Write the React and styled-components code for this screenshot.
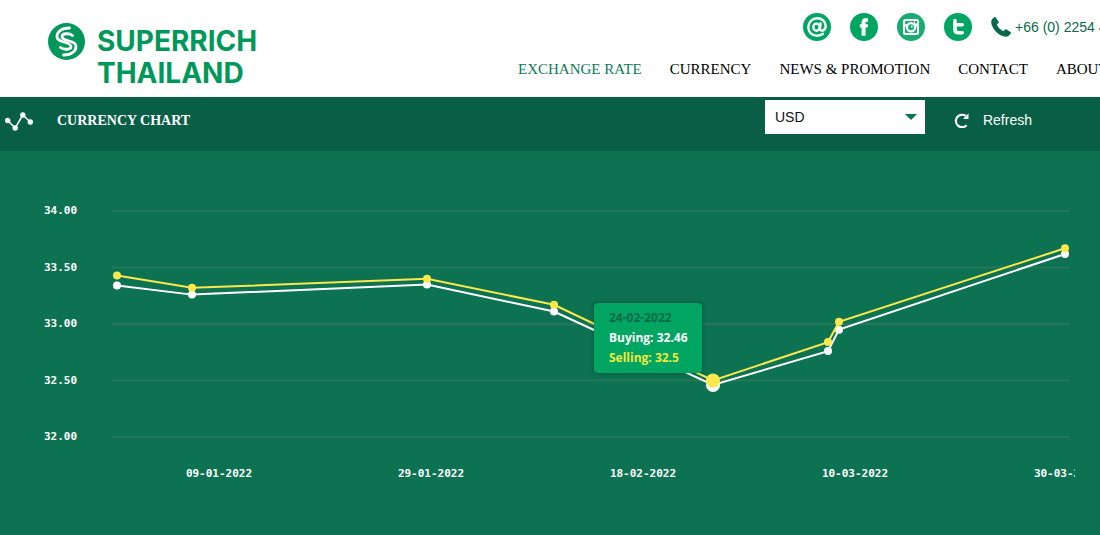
import React, { useState } from "react";
import styled, { createGlobalStyle } from "styled-components";

const CHART_W = 1075;
const CHART_H = 384;

const rateToY = (rate) => 60 + (34 - rate) * 113;

const rates = [
  { x: 117, buying: 33.34, selling: 33.43 },
  { x: 192, buying: 33.26, selling: 33.32 },
  { x: 427, buying: 33.35, selling: 33.4 },
  { x: 554, buying: 33.11, selling: 33.17 },
  { x: 713, buying: 32.46, selling: 32.5, date: "24-02-2022" },
  { x: 828, buying: 32.76, selling: 32.84 },
  { x: 839, buying: 32.95, selling: 33.02 },
  { x: 1065, buying: 33.62, selling: 33.67 },
];

const yTicks = [34, 33.5, 33, 32.5, 32];

const xTicks = [
  { x: 219, label: "09-01-2022" },
  { x: 431, label: "29-01-2022" },
  { x: 643, label: "18-02-2022" },
  { x: 855, label: "10-03-2022" },
  { x: 1067, label: "30-03-2022" },
];

const links = ["EXCHANGE RATE", "CURRENCY", "NEWS & PROMOTION", "CONTACT", "ABOUT US"];

const LogoMark = () => (
  <svg width="37" height="37" viewBox="0 0 37 37" aria-hidden="true">
    <circle cx="18.5" cy="18.5" r="18.5" fill="#00985a" />
    <g fill="none" stroke="#fff" strokeWidth="2.8" strokeLinecap="round">
      <path d="M21.5 5C13 5 9 9 9 13.5C9 20.5 23 18 23 23.5C23 27 15.500 27 12.500 24.500" />
      <path d="M15.500 32C24 32 28 28 28 23.500C28 16.500 14 19 14 13.500C14 10 21.500 10 24.500 12.500" />
    </g>
  </svg>
);

const MailIcon = () => (
  <svg width="28" height="28" viewBox="0 0 28 28" aria-hidden="true">
    <circle cx="14" cy="14" r="14" fill="#00a562" />
    <g fill="none" stroke="#fff" strokeWidth="2.4" strokeLinecap="round">
      <ellipse cx="13.5" cy="14.2" rx="3.2" ry="3.600" />
      <path d="M17.600 10.500L16.900 15.800C16.900 18.800 22.700 18.300 22.700 13C22.700 8.300 18.700 5.300 14.300 5.300C9.300 5.300 5.300 9.300 5.300 14.200C5.300 19.200 9.100 22.700 14 22.700C16.500 22.700 18.500 22 20 20.800" />
    </g>
  </svg>
);

const FacebookIcon = () => (
  <svg width="28" height="28" viewBox="0 0 28 28" aria-hidden="true">
    <circle cx="14" cy="14" r="14" fill="#00a562" />
    <path
      d="M11.600 22.800V14.500H9.800V11.200H11.600V9.500C11.600 6.300 13.200 5.300 15.900 5.300H18V8.800H16.700C15.800 8.800 15.600 9.200 15.600 9.900V11.200H18L17.700 14.500H15.600V22.800Z"
      fill="#fff"
    />
  </svg>
);

const InstagramIcon = () => (
  <svg width="28" height="28" viewBox="0 0 28 28" aria-hidden="true">
    <circle cx="14" cy="14" r="14" fill="#1aab70" />
    <path
      d="M8.500 6H19.500A2.500 2.500 0 0 1 22 8.500V19.500A2.500 2.500 0 0 1 19.500 22H8.500A2.500 2.500 0 0 1 6 19.500V8.500A2.500 2.500 0 0 1 8.500 6Z"
      fill="#fff"
    />
    <path d="M8 13.500H20V19.200A0.800 0.800 0 0 1 19.200 20H8.800A0.800 0.800 0 0 1 8 19.200Z" fill="#1aab70" />
    <path d="M8 8.800A0.800 0.800 0 0 1 8.800 8H17V11.200H8Z" fill="#1aab70" />
    <rect x="18" y="8" width="2.200" height="2.400" fill="#1aab70" />
    <circle cx="14" cy="14.200" r="5.200" fill="#fff" />
    <circle cx="14" cy="14.200" r="3" fill="#1aab70" />
    <circle cx="14.800" cy="13.500" r="1" fill="#fff" />
  </svg>
);

const TwitterIcon = () => (
  <svg width="28" height="28" viewBox="0 0 28 28" aria-hidden="true">
    <circle cx="14" cy="14" r="14" fill="#00a562" />
    <path
      d="M11 7.500V16.500C11 18.700 12 19.700 14.200 19.700H18.300M11 11.700H18.300"
      fill="none"
      stroke="#fff"
      strokeWidth="3.600"
      strokeLinecap="round"
      strokeLinejoin="round"
    />
  </svg>
);

const PhoneIcon = () => (
  <svg width="20" height="20" viewBox="0 0 20 20" aria-hidden="true">
    <path
      d="M4.500 0.300L7.500 4.500C8 5.300 7.800 5.800 7.200 6.300L5.800 7.500C7 10.500 9.500 13 12.500 14.300L13.800 12.800C14.300 12.200 14.900 12.100 15.600 12.500L19.500 15C20.100 15.400 20.100 16 19.700 16.600C18.500 18.500 17 19.800 14.800 19.700C8 19.300 0.500 11.500 0.200 5.200C0.100 3 1.300 1.500 3.200 0.200C3.700 -0.100 4.200 -0.100 4.500 0.300Z"
      fill="#08694a"
    />
  </svg>
);

const TrendIcon = () => (
  <svg width="28" height="20" viewBox="0 0 28 20" aria-hidden="true">
    <path d="M2.700 8.500L10.200 16L17.800 3L25.300 10" fill="none" stroke="#fff" strokeWidth="1.500" />
    <g fill="#fff">
      <circle cx="2.700" cy="8.500" r="2.700" />
      <circle cx="10.200" cy="16" r="2.700" />
      <circle cx="17.800" cy="3" r="2.700" />
      <circle cx="25.300" cy="10" r="2.700" />
    </g>
  </svg>
);

const RefreshIcon = () => (
  <svg width="16" height="16" viewBox="0 0 16 16" aria-hidden="true">
    <path d="M12.600 13.200A6.200 6.200 0 1 1 11.800 4" fill="none" stroke="#fff" strokeWidth="2.200" />
    <path d="M14.500 1.200V7H9Z" fill="#fff" />
  </svg>
);

const socials = [
  { name: "Email", Icon: MailIcon },
  { name: "Facebook", Icon: FacebookIcon },
  { name: "Instagram", Icon: InstagramIcon },
  { name: "Twitter", Icon: TwitterIcon },
];

const Series = ({ field, color, active }) => (
  <g fill={color}>
    <polyline
      points={rates.map((r) => `${r.x},${rateToY(r[field])}`).join(" ")}
      fill="none"
      stroke={color}
      strokeWidth="2"
    />
    {rates.map((r) => (
      <circle key={r.x} cx={r.x} cy={rateToY(r[field])} r={r === active ? 7 : 4} />
    ))}
  </g>
);

const CurrencyChart = () => {
  const active = rates.find((r) => r.date);
  const place = {
    right: `calc(${100 - (active.x / CHART_W) * 100}% + 11px)`,
    bottom: `calc(${100 - (rateToY(active.selling) / CHART_H) * 100}% + 8px)`,
  };

  return (
    <ChartPanel>
      <ChartArea>
        <Plot viewBox={`0 0 ${CHART_W} ${CHART_H}`} role="img" aria-label="Currency chart">
          {yTicks.map((tick) => (
            <g key={tick}>
              <line x1="112" x2="1070" y1={rateToY(tick)} y2={rateToY(tick)} stroke="#267659" strokeWidth="2" />
              <AxisText x="44" y={rateToY(tick) + 3}>
                {tick.toFixed(2)}
              </AxisText>
            </g>
          ))}
          {xTicks.map((tick) => (
            <AxisText key={tick.label} x={tick.x} y="326" textAnchor="middle">
              {tick.label}
            </AxisText>
          ))}
          <Series field="buying" color="#fff" active={active} />
          <Series field="selling" color="#fbe84b" active={active} />
        </Plot>
        <Tooltip style={place}>
          <TooltipLine $color="#08694a">{active.date}</TooltipLine>
          <TooltipLine $color="#fff">Buying: {active.buying}</TooltipLine>
          <TooltipLine $color="#f0e83c">Selling: {active.selling}</TooltipLine>
        </Tooltip>
      </ChartArea>
    </ChartPanel>
  );
};

const App = () => {
  const [currency, setCurrency] = useState("USD");

  return (
    <Page>
      <GlobalStyle />
      <Header>
        <Logo href="#">
          <LogoMark />
          <LogoText>
            SUPERRICH
            <br />
            THAILAND
          </LogoText>
        </Logo>
        <HeaderRight>
          <Contacts>
            {socials.map(({ name, Icon }) => (
              <SocialLink key={name} href="#" aria-label={name}>
                <Icon />
              </SocialLink>
            ))}
            <Phone href="tel:+6622544444">
              <PhoneIcon />
              +66 (0) 2254 4444
            </Phone>
          </Contacts>
          <Nav>
            {links.map((link, i) => (
              <NavLink key={link} href="#" $active={i === 0}>
                {link}
              </NavLink>
            ))}
          </Nav>
        </HeaderRight>
      </Header>
      <Toolbar>
        <TrendIcon />
        <Title>CURRENCY CHART</Title>
        <SelectBox>
          <Select aria-label="Currency" value={currency} onChange={(e) => setCurrency(e.target.value)}>
            <option>USD</option>
            <option>EUR</option>
            <option>JPY</option>
          </Select>
          <Arrow />
        </SelectBox>
        <RefreshButton type="button">
          <RefreshIcon />
          Refresh
        </RefreshButton>
      </Toolbar>
      <CurrencyChart />
    </Page>
  );
};

export default App;

const GlobalStyle = createGlobalStyle`
  * {
    box-sizing: border-box;
  }
  body {
    margin: 0;
    background: #0d7252;
    font-family: "Liberation Sans", Arial, sans-serif;
    font-size: 14px;
  }
  svg {
    display: block;
    flex-shrink: 0;
  }
`;

const Page = styled.div`
  overflow: hidden;
`;

const Header = styled.header`
  display: flex;
  justify-content: space-between;
  height: 97px;
  padding-left: 48px;
  background: #fff;
`;

const Logo = styled.a`
  display: flex;
  flex-shrink: 0;
  gap: 12px;
  padding-top: 23px;
  color: #00985a;
  text-decoration: none;
`;

const LogoText = styled.span`
  padding-top: 2px;
  font-family: Inter, sans-serif;
  font-size: 28px;
  font-weight: 700;
  line-height: 32px;
`;

const HeaderRight = styled.div`
  display: flex;
  flex-direction: column;
  gap: 18px;
  width: 582px;
  padding-top: 13px;
  white-space: nowrap;
`;

const Contacts = styled.div`
  display: flex;
  align-items: center;
  gap: 19px;
  padding-left: 285px;
`;

const SocialLink = styled.a`
  display: block;
`;

const Phone = styled.a`
  display: flex;
  align-items: center;
  gap: 4px;
  color: #08694a;
  text-decoration: none;
`;

const Nav = styled.nav`
  display: flex;
  gap: 28px;
`;

const NavLink = styled.a`
  color: ${({ $active }) => ($active ? "#0d7a5a" : "#000")};
  font-family: "Liberation Serif", "Times New Roman", serif;
  font-size: 15px;
  line-height: 20px;
  text-decoration: none;
`;

const Toolbar = styled.div`
  display: flex;
  align-items: flex-start;
  height: 54px;
  padding: 3px 68px 0 5px;
  background: #085f45;

  > svg {
    margin-top: 12px;
  }
`;

const Title = styled.h1`
  flex: 1;
  margin: 11px 0 0 24px;
  color: #fff;
  font-family: "Liberation Serif", "Times New Roman", serif;
  font-size: 14px;
  line-height: 20px;
`;

const SelectBox = styled.div`
  position: relative;
  width: 160px;
`;

const Select = styled.select`
  display: block;
  width: 100%;
  height: 34px;
  padding: 0 10px;
  border: 0;
  border-radius: 0;
  appearance: none;
  background: #fff;
  color: #111;
  font: inherit;
`;

const Arrow = styled.span`
  position: absolute;
  top: 14px;
  right: 8px;
  border: 6px solid transparent;
  border-top-color: #08734f;
  border-bottom: 0;
  pointer-events: none;
`;

const RefreshButton = styled.button`
  display: flex;
  align-items: center;
  gap: 13px;
  margin: 10px 0 0 29px;
  padding: 0;
  border: 0;
  background: none;
  color: #fff;
  font: inherit;
  line-height: 20px;
  cursor: pointer;
`;

const ChartPanel = styled.main`
  padding-right: 25px;
`;

const ChartArea = styled.div`
  position: relative;
`;

const Plot = styled.svg`
  width: 100%;
  height: auto;
`;

const AxisText = styled.text`
  fill: #fff;
  font-family: "DejaVu Sans Mono", monospace;
  font-size: 11px;
  font-weight: 700;
`;

const Tooltip = styled.div`
  position: absolute;
  width: 108px;
  padding: 5px 0 5px 15px;
  border-radius: 4px;
  background: #00a562;
  box-shadow: 0 0 4px rgba(0, 0, 0, 0.3);
`;

const TooltipLine = styled.div`
  color: ${({ $color }) => $color};
  font-family: "Open Sans", sans-serif;
  font-size: 12px;
  font-weight: 700;
  line-height: 20px;
  white-space: nowrap;
`;
